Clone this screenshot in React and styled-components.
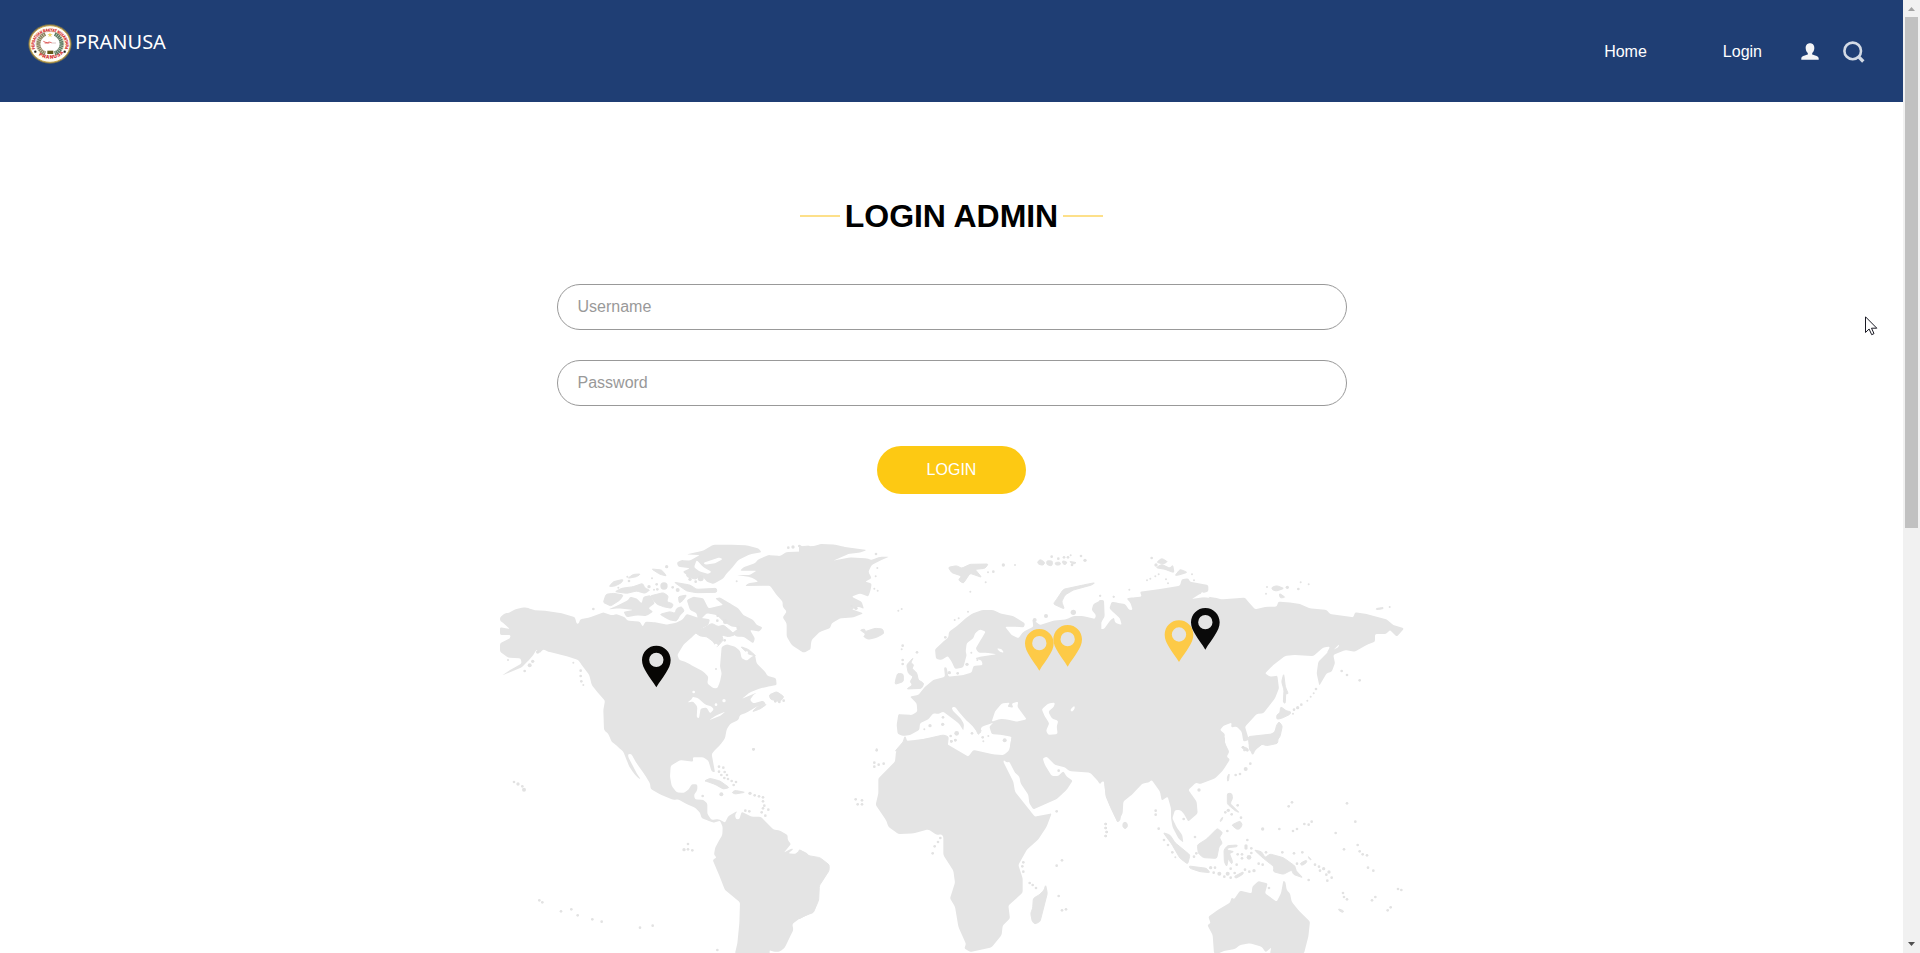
import React from "react";
import styled, { createGlobalStyle } from "styled-components";

const GlobalStyle = createGlobalStyle`
  * { box-sizing: border-box; }
  body { margin: 0; background: #fff; font-family: "Liberation Sans", Arial, sans-serif; overflow: hidden; }
`;

const Screen = styled.div`
  display: flex;
  width: 100%;
  height: 953px;
  overflow: hidden;
`;
const Page = styled.div`
  flex: 1;
  min-width: 0;
  overflow: hidden;
`;
const Header = styled.header`
  display: flex;
  justify-content: space-between;
  height: 102px;
  padding: 24px 38px 0 28px;
  background: #1f3e74;
  color: #fff;
`;
const Brand = styled.a`
  display: flex;
  align-items: flex-start;
  height: 42px;
  font: 20px/36px "Noto Sans", "Open Sans", sans-serif;
`;
const BrandName = styled.span`
  margin-left: 3px;
`;
const CrestSvg = styled.svg`
  width: 44px;
  height: 40px;
  overflow: visible;
`;
const Nav = styled.nav`
  display: flex;
  align-items: center;
  height: 55px;
  font-size: 16px;
`;
const NavLink = styled.a`
  margin-right: ${(p) => p.$gap}px;
`;
const IconSlot = styled.span`
  display: flex;
  margin-right: ${(p) => p.$gap || 0}px;
`;
const Main = styled.main`
  display: flex;
  flex-direction: column;
  align-items: center;
  padding-top: 95px;
`;
const Title = styled.h1`
  display: flex;
  align-items: center;
  gap: 5px;
  margin: 0 0 49px;
  height: 38px;
  font-size: 32px;
  line-height: 38px;
  letter-spacing: -0.05px;
  color: #000;
  &::before, &::after {
    content: "";
    width: 40px;
    height: 2px;
    background: #fde08a;
  }
`;
const Form = styled.form`
  display: flex;
  flex-direction: column;
  align-items: center;
  width: 790px;
`;
const Field = styled.input`
  width: 100%;
  height: 46px;
  margin-bottom: ${(p) => p.$gap}px;
  padding: 0 20px;
  border: 1px solid #999;
  border-radius: 23px;
  background: #fff;
  font: 16px "Liberation Sans", Arial, sans-serif;
  outline: none;
  &::placeholder { color: #999; opacity: 1; }
`;
const Submit = styled.button`
  width: 149px;
  height: 48px;
  padding: 0;
  border: 0;
  border-radius: 24px;
  background: #fdc913;
  color: #fff;
  font: 16px "Liberation Sans", Arial, sans-serif;
`;
const MapSvg = styled.svg`
  display: block;
  width: 930px;
  height: 423px;
  margin: 36px 0 0 7px;
`;
const Scrollbar = styled.aside`
  display: flex;
  flex-direction: column;
  align-items: center;
  width: 17px;
  background: #f1f1f1;
`;
const ScrollArrow = styled.svg`
  width: 17px;
  height: 17px;
  fill: ${(p) => p.$color};
`;
const Thumb = styled.div`
  width: 13px;
  height: 511px;
  margin-bottom: auto;
  background: #c1c1c1;
`;
const Pointer = styled.svg`
  position: absolute;
  left: 1865px;
  top: 315.500px;
  width: 13px;
  height: 20px;
`;

/* Coastlines, drawn in six sheets at three units to the pixel. */
const sheets = [
  {
    at: [0, 0],
    land: [
      "30,262 45,250 58,248 75,238 100,232 115,234 130,240 170,243 215,250 255,262 260,282 267,280 270,268 300,262 340,247 365,256 380,252 405,262 412,272 450,275 458,290 466,275 490,276 530,284 560,278 578,268 590,252 600,255 620,262 660,268 655,285 640,292 625,303 605,322 580,345 562,375 568,390 585,395 600,403 640,425 655,440 652,460 670,475 682,475 690,455 695,430 690,410 695,350 710,343 735,350 750,362 755,385 770,392 785,380 795,375 800,400 825,425 832,437 858,445 860,465 835,470 810,475 780,487 755,507 800,488 790,495 780,510 790,520 820,512 828,522 800,530 770,548 750,555 745,570 720,582 710,598 705,625 690,645 675,660 398,660 365,635 355,612 342,600 340,540 345,512 325,490 305,465 298,435 275,405 265,390 235,380 175,365 160,358 148,370 140,358 130,375 115,392 95,412 50,431 36,436 60,420 95,400 92,385 55,383 30,365 30,340 60,325 62,315 30,315 30,292 60,297 35,275 30,272",
      "960,48 935,50 930,60 960,62",
      "962,64 890,66 870,78 835,75 805,88 795,100 760,112 750,122 800,122 780,135 740,135 775,140 790,145 805,155 775,160 765,168 840,167 860,195 878,215 878,230 890,245 878,262 890,280 890,320 905,345 940,368 962,358",
      "590,73 640,62 670,44 720,44 770,46 805,55 815,67 780,73 745,90 725,115 710,130 700,145 670,162 650,155 640,142 610,135 590,135 578,125 600,115 565,110 560,98 575,90 600,92 630,75",
      "553,157 600,165 620,178 680,175 680,187 620,188 590,183",
      "340,218 348,193 370,190 400,195 390,210 362,228 350,222",
      "357,170 370,155 400,148 395,158 375,168",
      "375,185 395,175 430,170 458,160 465,175 480,180 465,190 440,183 410,190",
      "413,145 430,133 452,132 440,140",
      "485,117 515,120 530,138 510,133",
      "355,238 385,225 415,210 420,200 440,205 455,220 460,200 480,195 495,220 475,235 490,245 470,258 440,256 410,262 400,245 430,240 385,235",
      "480,198 520,188 535,198 530,215 550,222 545,235 520,230 500,222",
      "510,253 540,245 555,250 560,235 575,230 583,243 570,255 560,273 540,270 525,262",
      "565,200 590,195 580,210 568,220",
      "590,210 610,200 640,205 655,235 700,225 675,205 690,202 720,220 745,235 760,255 790,270 800,285 818,292 808,305 780,300 795,325 790,340 760,320 740,320 725,310 750,292 725,290 700,275 680,255 650,250 625,275 620,250 600,240",
      "608,302 640,295 665,280 685,290 700,285 725,305 735,315 715,320 695,315 700,330 680,352 670,335 650,320 630,318",
      "752,350 775,358 798,378 775,372",
      "837,495 860,485 882,500 870,515 842,508",
      "787,545 805,528 830,523 810,537",
      "590,132 605,120 630,132 618,148 590,140",
    ],
    water: [
      "592,517 605,508 608,500 625,505 645,523 665,530 672,538 660,550 650,533 632,535 627,565 620,562 622,530 610,515",
      "658,570 680,555 706,545 690,558",
      "612,112 620,90 640,112 665,125 655,132 630,125",
      "640,98 690,82 698,88 675,100 645,104",
      "255,255 262,282 268,265 292,250 270,258",
      "654,450 664,445 672,460 664,470",
    ],
    dots: "530,110,5 486,145,3 412,140,3 385,173,3 417,153,4 477,170,5 500,163,4 502,178,4 492,179,3 522,168,11 548,172,4 563,180,6 600,148,5 617,155,4 632,145,9 740,154,3 895,53,4 909,51,5 928,48,4 310,237,4 683,257,4 682,272,4 706,275,7 745,293,6 690,333,4 704,331,4 678,417,3 143,366,5 54,390,3 128,394,5 119,406,6 104,423,4 250,398,3 272,422,4 272,438,4 274,454,4 280,465,3 856,514,4 868,516,4 881,512,4 790,658,4",
    lakes: "611,486,4 702,512,5 678,524,4 678,346,5 770,368,4",
  },
  {
    at: [930, 0],
    land: [
      "-3,45 10,50 45,48 60,42 105,44 130,50 200,60 180,68 145,72 100,92 150,82 200,85 215,90 240,80 268,80 240,92 215,105 205,125 215,145 195,155 215,160 212,180 205,200 180,190 155,200 185,215 192,237 175,230 155,238 190,250 160,262 120,265 95,280 90,295 60,305 35,330 30,355 15,368 -3,358",
      "180,300 195,297 195,305 225,295 248,297 252,310 230,322 205,328 190,320 198,312",
      "405,358 430,335 445,322 447,305 475,285 500,262 515,252 545,240 580,240 600,250 640,258 675,280 672,292 640,290 615,290 635,315 655,325 670,305 700,290 697,268 720,285 760,272 800,268 820,258 850,258 885,267 888,255 875,240 880,222 904,210 904,664 628,664 635,620 605,615 575,612 568,590 580,578 560,585 545,590 540,605 545,610 530,605 515,585 500,572 480,550 465,530 455,532 458,542 482,565 492,583 490,602 480,585 470,575 450,560 430,545 415,552 400,550 385,568 360,580 358,600 330,615 310,618 293,612 290,585 295,552 335,555 352,545 350,520 330,500 355,495 375,470 400,450 435,440 432,412 440,412 445,440 490,435 515,428 520,408 548,405 545,392 525,385 540,380 590,373 560,368 535,368 527,355 545,325 557,305 540,298 525,310 520,325 500,340 497,365 500,375 490,412 465,417 455,395 443,378 425,390 408,387",
      "285,664 310,635 315,618 320,635 350,633 430,615 445,620 442,645 450,664",
      "320,405 340,383 332,398 342,405 335,415 350,428 355,450 372,460 365,475 320,477 338,465 330,455 340,440 325,430",
      "285,463 288,445 293,430 310,432 310,455",
      "445,112 470,107 485,115 510,103 565,102 555,115 525,118 545,142 510,130 490,160 475,150 485,138 455,128",
      "760,222 772,205 790,178 850,165 885,158 875,165 820,180 795,195 785,215 793,237",
      "712,97 720,88 735,97 730,106 716,103",
      "740,92 758,93 756,108 740,104",
      "764,98 780,96 782,104 768,106",
      "787,92 802,96 796,105 788,101",
      "808,94 830,98 818,103",
      "525,590 545,600 535,615",
    ],
    water: [
      "575,575 585,545 605,520 630,518 622,530 640,533 635,520 655,515 652,530 680,568 650,575 620,568 600,567",
      "725,538 745,520 765,518 762,530 745,545 755,565 775,573 770,590 773,612 745,615 738,602 748,580 735,560",
      "810,540 823,527 825,535 816,546",
      "590,355 605,357 612,368 600,366",
    ],
    dots: "228,72,4 232,114,3 227,139,3 223,176,3 233,182,3 155,228,3 168,235,5 295,242,3 305,237,3 308,347,4 305,358,3 351,367,4 308,390,4 308,402,4 464,270,3 476,265,3 504,245,3 557,157,3 511,185,3 564,127,3 580,125,4 610,105,5 645,105,3 755,80,4 775,86,4 792,82,4 804,82,4 812,76,3 843,78,4 855,91,5 816,105,4 738,258,6 820,247,8 704,270,6 436,322,4 501,403,5 448,428,5 473,430,4 514,368,3 532,390,3 429,562,4 428,583,5 390,587,5 373,598,3 470,610,7 452,618,4 466,630,4 454,634,4 516,610,4 548,622,4 565,618,3 550,634,3 614,631,6 900,197,3 941,200,3 230,658,3",
    lakes: "",
  },
  {
    at: [1830, 0],
    land: [
      "-4,210 12,210 14,260 -4,290 -4,297 12,297 30,272 42,262 45,278 65,285 60,265 38,245 28,235 35,215 50,218 75,222 88,240 98,240 92,220 80,205 100,202 125,200 120,185 180,177 240,167 245,148 265,145 270,155 325,165 325,185 300,192 275,207 320,200 345,203 365,208 435,203 445,215 465,238 500,230 530,230 535,215 575,218 600,222 630,235 680,240 690,252 760,262 765,247 800,252 860,268 880,285 912,295 900,310 890,320 870,300 858,312 825,312 825,335 800,345 765,365 735,360 700,375 705,400 695,425 680,430 658,467 650,430 655,395 680,370 715,352 718,342 690,370 680,370 690,350 670,352 640,378 580,375 555,378 520,405 495,430 510,440 532,437 537,475 525,505 490,550 470,552 435,590 447,630 430,635 425,605 410,590 393,592 395,578 370,588 360,600 375,612 372,630 385,664 -4,664",
      "168,113 185,103 210,115 218,105 222,128 195,118",
      "170,97 185,85 203,95 190,102",
      "225,137 240,118 262,127 240,134",
      "515,172 530,167 552,175 530,183 517,180",
      "538,190 556,202 540,204",
      "828,236 850,232 850,236 830,239",
      "551,432 556,470 565,492 557,490 556,520 550,518 552,480 545,455",
      "542,530 560,543 573,545 570,553 545,565 530,568 530,555 540,548",
      "537,575 547,588 540,620 525,638 490,640 465,658 450,664 447,645 480,632 500,622 525,605 530,585",
      "430,664 432,650 447,658",
    ],
    water: ["305,185 325,198 330,204 300,200"],
    dots: "155,84,4 168,105,5 141,151,3 151,146,3 166,139,3 176,133,3 198,148,3 204,160,3 276,133,3 282,151,3 88,179,3 1,197,3 41,200,3 501,171,3 498,191,3 562,172,5 595,177,4 602,157,3 626,163,3 869,231,3 725,423,4 741,435,4 779,451,4 648,477,4 641,490,3 632,500,3 622,512,3 604,524,4 593,533,5 582,539,4 579,551,3 429,652,4",
    lakes: "",
  },
  {
    at: [0, 630],
    land: [
      "365,0 385,22 400,35 412,65 418,80 430,98 445,115 452,117 440,100 430,80 415,52 414,42 424,42 440,70 465,105 480,130 482,147 510,163 550,180 565,178 590,192 615,203 630,218 635,235 650,240 670,248 690,242 698,260 697,285 685,305 675,325 672,345 680,352 668,360 685,400 705,450 750,487 748,550 742,610 735,640 840,640 838,630 850,635 870,635 885,622 900,590 910,570 907,552 930,535 960,522 960,348 945,335 930,330 915,342 895,340 910,328 905,325 882,338 903,312 893,300 893,285 870,272 850,268 812,230 785,230 755,215 748,238 738,238 735,225 742,213 715,228 705,248 685,237 665,240 652,222 652,190 640,180 615,178 612,165 622,150 622,133 605,133 595,150 580,159 560,157 545,138 540,110 542,78 570,60 610,65 608,52 640,52 655,62 665,95 675,97 665,42 700,0",
      "643,123 660,115 690,123 718,143 700,147 675,133 650,124",
      "725,158 735,151 765,157 735,162",
    ],
    water: [],
    dots: "791,28,4 687,80,4 700,83,4 687,95,4 704,96,4 694,105,4 711,105,4 703,114,4 714,117,4 725,123,4 738,126,4 731,135,4 694,163,6 638,168,4 780,160,5 794,166,4 807,169,4 819,172,4 819,184,4 823,197,4 819,205,4 835,209,4 815,217,4 826,227,4 766,212,4 778,214,4 72,126,4 84,132,5 97,139,4 102,149,6 594,312,4 582,329,5 594,328,4 607,331,4 148,481,4 157,487,4 213,514,4 244,508,4 263,526,4 307,538,4 335,545,4 450,563,4 488,557,4 682,630,4",
    lakes: "742,232,3",
  },
  {
    at: [930, 630],
    land: [
      "-3,328 25,347 60,353 88,375 87,392 58,437 56,480 40,518 18,525 -3,537",
      "304,-10 318,3 345,0 440,-10 440,12 505,50 520,30 580,43 612,45 628,30 635,-10 962,-10 962,240 953,248 930,200 917,170 912,125 908,122 900,133 893,122 870,98 808,93 795,82 765,75 740,50 728,55 735,75 755,108 775,108 790,93 800,110 818,122 800,150 770,177 700,208 688,190 685,165 662,130 658,110 645,98 628,65 620,68 612,60 610,65 640,125 645,155 690,212 705,230 755,220 740,260 715,298 680,330 655,375 668,415 668,458 625,497 630,535 608,557 605,585 575,622 510,636 493,625 498,612 475,560 465,500 450,475 465,428 460,392 430,345 430,290 425,283 410,285 385,268 340,280 295,282 265,260 258,240 227,195 235,160 235,115 285,65 288,35 310,15 315,0",
      "737,435 742,460 720,545 705,552 697,545 692,520 698,505 700,475 720,463 732,450",
    ],
    water: [],
    dots: "230,31,4 223,68,4 236,74,4 223,80,4 251,71,4 167,178,4 186,181,4 173,193,4 186,193,4 421,294,4 414,306,4 404,319,4 398,340,4 770,214,4 917,252,4 917,264,4 920,276,4 917,288,4 786,361,4 770,377,4 670,367,4 667,379,4 670,395,4 689,429,4 698,435,4 708,444,4 776,468,4 786,511,4 798,508,4 454,4,4 466,1,4 776,92,4",
    lakes: "",
  },
  {
    at: [1830, 630],
    land: [
      "-4,-10 375,-10 375,10 388,35 380,50 390,58 370,90 345,115 300,132 288,128 265,150 290,185 293,220 265,245 250,218 240,210 225,210 217,235 230,262 247,285 250,308 235,295 218,262 213,235 213,205 203,170 185,182 180,155 155,120 145,128 128,130 100,160 70,185 68,220 53,248 30,200 17,165 12,122 -4,130",
      "70,247 80,247 83,260 75,267 68,260",
      "190,278 210,285 225,308 270,345 263,372 240,355 215,312",
      "267,378 320,385 330,398 300,395 270,385",
      "292,315 320,297 352,265 368,278 358,292 367,310 357,320 350,355 310,353 295,340",
      "372,330 382,317 412,315 412,320 385,323 380,330 402,335 388,340 398,365 395,373 385,355 380,380 373,365",
      "382,160 395,160 398,175 390,190 418,218 405,212 382,192",
      "395,255 420,243 427,253 420,267 410,268",
      "360,242 368,230 368,236 362,246",
      "383,125 382,110 388,100 386,120",
      "463,330 485,335 495,353 510,342 550,353 585,378 588,392 608,413 580,403 575,390 550,403 520,395 522,380 490,355",
      "402,410 430,395 430,402 408,415",
      "600,370 620,360 620,368 605,377",
      "624,348 635,360 628,358",
      "715,506 732,513 728,518 717,512",
      "342,640 338,585 322,555 332,550 325,530 350,512 390,488 395,472 402,478 420,452 455,460 457,440 475,423 503,430 495,460 530,485 543,460 550,422 556,425 560,450 570,460 575,485 595,510 630,545 625,590 612,640 510,640 514,622 497,637 485,620 450,610 420,615 405,627 375,632 355,640",
      "445,-10 535,-20 533,10 500,17 485,12 465,30 458,45 450,25 447,12",
    ],
    water: [],
    dots: "17,252,4 17,264,4 20,276,4 17,288,4 167,212,4 167,224,4 176,266,4 192,300,4 204,315,4 217,337,4 226,352,3 251,237,4 285,291,4 289,340,4 282,350,4 297,150,5 429,22,4 442,31,4 451,71,4 437,87,6 420,102,4 407,105,4 413,196,4 385,211,5 376,217,4 395,223,4 423,233,4 382,273,4 442,300,4 438,318,5 438,324,5 454,325,4 454,339,4 447,352,7 413,343,4 426,343,4 426,355,4 410,374,4 392,386,4 498,337,4 547,337,4 582,340,4 607,337,4 476,371,4 488,374,4 462,392,5 448,395,4 435,389,4 404,399,4 383,401,6 373,410,4 392,413,4 358,401,6 341,398,4 345,383,4 332,383,5 488,267,5 538,267,4 579,273,4 591,267,4 613,252,4 626,254,4 635,245,4 566,199,4 576,187,4 741,190,4 766,245,4 707,279,4 732,328,4 773,315,4 779,334,4 788,343,4 801,346,4 804,383,4 820,392,4 645,374,4 657,380,4 660,392,4 671,386,5 687,396,5 679,404,4 695,413,4 682,422,4 626,420,4 591,371,4 894,447,4 904,450,4 826,471,4 816,481,4 872,502,4 863,511,4 729,459,4 732,471,4 741,478,4 507,444,4",
    lakes: "",
  },
];

const pins = [
  { x: 499, y: 347, color: "#070604" },
  { x: 1648, y: 297, color: "#fdca47" },
  { x: 1733, y: 285, color: "#fdca47" },
  { x: 2067, y: 271, color: "#fdca47" },
  { x: 2146, y: 234, color: "#0a0a0a" },
];

/* Closed outline with each corner rounded off, so coasts bend softly. */
function coast(text) {
  const p = text.split(" ").map((s) => s.split(",").map(Number));
  const cut = (a, b) => {
    const d = Math.hypot(b[0] - a[0], b[1] - a[1]);
    const t = d ? Math.min(0.5, 5 / d) : 0;
    return [a[0] + (b[0] - a[0]) * t, a[1] + (b[1] - a[1]) * t].map((n) => n.toFixed(1));
  };
  return p
    .map((c, i) => {
      const before = p[(i + p.length - 1) % p.length];
      const after = p[(i + 1) % p.length];
      return `${i ? "L" : "M"}${cut(c, before)}Q${c} ${cut(c, after)}`;
    })
    .join("") + "Z";
}

function Dots({ list, fill }) {
  if (!list) return null;
  return list.split(" ").map((s, i) => {
    const [x, y, r] = s.split(",").map(Number);
    return <circle key={i} cx={x} cy={y} r={r} fill={fill} />;
  });
}

function WorldMap() {
  return (
    <MapSvg viewBox="0 0 2790 1269" aria-label="World map">
      {sheets.map((s, i) => (
        <g key={i} transform={`translate(${s.at[0]} ${s.at[1]})`}>
          {s.land.map((l, k) => (
            <path key={k} d={coast(l)} fill="#e4e4e4" stroke="#e4e4e4" strokeWidth={l.length < 130 ? 3 : 0} strokeLinejoin="round" />
          ))}
          {s.water.map((l, k) => <path key={k} d={coast(l)} fill="#fff" />)}
          <Dots list={s.dots} fill="#e2e2e2" />
          <Dots list={s.lakes} fill="#fff" />
        </g>
      ))}
      {pins.map((p, i) => (
        <path
          key={i}
          transform={`translate(${p.x} ${p.y})`}
          fill={p.color}
          fillRule="evenodd"
          d="M0 0C24 0 43 19 43 43C43 69 20 92 0 125C-20 92-43 69-43 43C-43 19-24 0 0 0ZM0 21A21.500 21.500 0 1 0 0 64A21.500 21.500 0 1 0 0 21Z"
        />
      ))}
    </MapSvg>
  );
}

function Crest() {
  return (
    <CrestSvg viewBox="0 0 132 120" aria-label="Pranusa crest">
      <defs>
        <path id="ringTop" d="M21 75A47 41 0 1 1 111 75" />
        <path id="ringBottom" d="M24 84A50 44 0 0 0 108 84" />
      </defs>
      <ellipse cx="66" cy="60" rx="65" ry="59" fill="#756f50" />
      <ellipse cx="66" cy="60" rx="61" ry="55" fill="#fffdf5" stroke="#c6a54b" strokeWidth="3" />
      <ellipse cx="66" cy="59" rx="42" ry="37" fill="#fff" stroke="#d9c9a4" strokeWidth="2" />
      <g fill="#d4241f" stroke="#d4241f" strokeWidth=".6" fontFamily="Liberation Sans" fontWeight="bold">
        <text fontSize="12"><textPath href="#ringTop" textLength="162" lengthAdjust="spacingAndGlyphs">PERSATUAN RAKYAT NUSANTARA</textPath></text>
        <text fontSize="14"><textPath href="#ringBottom" startOffset="12" textLength="82">PRANUSA</textPath></text>
      </g>
      <path d="M52 30C24 42 25 79 52 88" fill="none" stroke="#8d8560" strokeWidth="12" strokeDasharray="5 1" />
      <path d="M80 30C108 42 107 79 80 88" fill="none" stroke="#5f7d63" strokeWidth="12" strokeDasharray="5 1" />
      <path d="M66 25l2 5h6l-5 4 2 6-5-4-5 4 2-6-5-4h6z" fill="#f0d568" />
      <path d="M58 80h18v10H58z" fill="#625818" />
      <path d="M46 52l7 3 6 1 4-2 8 2M50 57h14" fill="none" stroke="#d84c48" strokeWidth="2.500" />
      <path d="M70 57h14" stroke="#c9a5a5" strokeWidth="2" />
      <circle cx="22" cy="83" r="3.500" fill="#222" />
      <circle cx="110" cy="83" r="3.500" fill="#222" />
    </CrestSvg>
  );
}

export default function App() {
  return (
    <>
      <GlobalStyle />
      <Screen>
        <Page>
          <Header>
            <Brand>
              <Crest />
              <BrandName>PRANUSA</BrandName>
            </Brand>
            <Nav>
              <NavLink $gap={76}>Home</NavLink>
              <NavLink $gap={39}>Login</NavLink>
              <IconSlot $gap={24}>
                <svg width="18" height="17" viewBox="0 0 18 17" fill="#f4f5f7">
                  <path d="M9 .3C6 .3 4.500 2.500 4.700 5.500C4.900 7.700 5.700 9 6.800 10V11.600C5 12.500.3 12.800.3 15.600V16.700H17.700V15.600C17.700 12.800 13 12.500 11.200 11.600V10C12.300 9 13.100 7.700 13.300 5.500C13.500 2.500 12 .3 9 .3Z" />
                </svg>
              </IconSlot>
              <IconSlot>
                <svg width="22" height="22" viewBox="0 0 22 22" fill="none" stroke="#d3dae5">
                  <circle cx="9.700" cy="9.900" r="8.300" strokeWidth="2.600" />
                  <path d="M15.700 15.900L20.300 20.500" strokeWidth="3.400" />
                </svg>
              </IconSlot>
            </Nav>
          </Header>
          <Main>
            <Title>LOGIN ADMIN</Title>
            <Form onSubmit={(e) => e.preventDefault()}>
              <Field $gap={30} type="text" placeholder="Username" />
              <Field $gap={40} type="password" placeholder="Password" />
              <Submit>LOGIN</Submit>
            </Form>
            <WorldMap />
          </Main>
        </Page>
        <Scrollbar>
          <ScrollArrow $color="#a3a3a3" viewBox="0 0 17 17"><path d="M5 11L8.500 7L12 11Z" /></ScrollArrow>
          <Thumb />
          <ScrollArrow $color="#505050" viewBox="0 0 17 17"><path d="M5 6L8.500 10L12 6Z" /></ScrollArrow>
        </Scrollbar>
      </Screen>
      <Pointer viewBox="0 0 13 20">
        <path d="M.5.800V16.500L4.100 13L6.700 18.700L9 17.600L6.500 12.200H11.800Z" fill="#fff" stroke="#1a1a24" />
      </Pointer>
    </>
  );
}
